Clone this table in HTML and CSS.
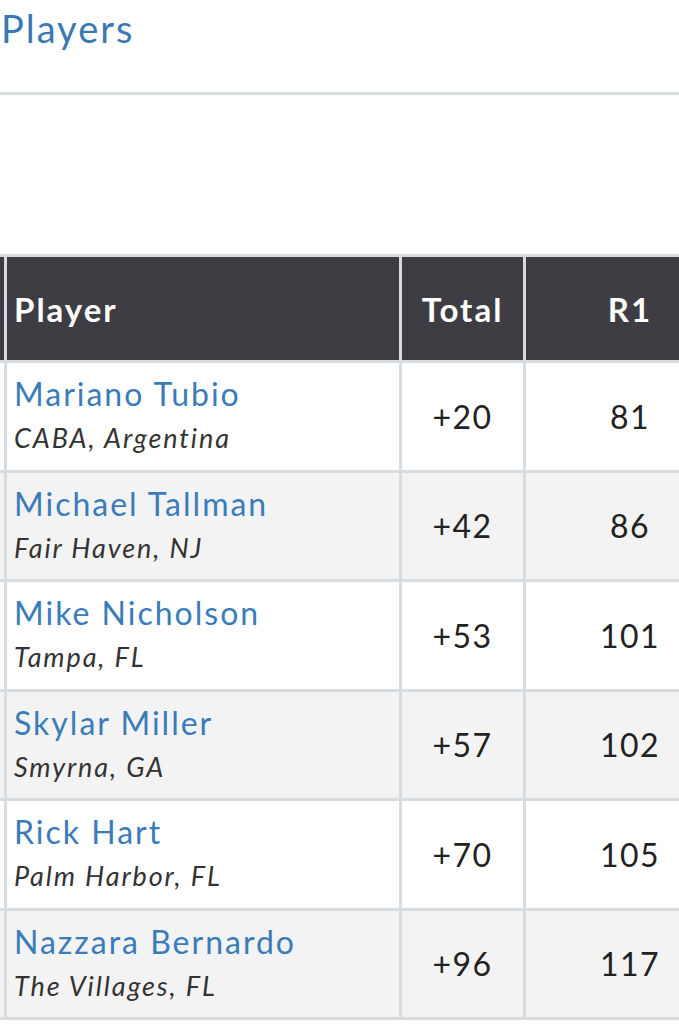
FILE: index.html
```html
<!DOCTYPE html>
<html>
<head>
<meta charset="utf-8">
<link rel="stylesheet" href="styles.css">
</head>
<body>
<header class="page-head">
  <h1 class="title">Players</h1>
</header>
<div class="table-wrap">
  <table class="board">
    <thead>
      <tr class="head-row">
        <th class="c-pos"></th>
        <th class="c-player">Player</th>
        <th class="c-total">Total</th>
        <th class="c-r1">R1</th>
      </tr>
    </thead>
    <tbody>
      <tr class="row">
        <td class="c-pos"></td>
        <td class="c-player"><div class="name">Mariano Tubio</div><div class="loc">CABA, Argentina</div></td>
        <td class="c-total">+20</td>
        <td class="c-r1">81</td>
      </tr>
      <tr class="row alt">
        <td class="c-pos"></td>
        <td class="c-player"><div class="name">Michael Tallman</div><div class="loc">Fair Haven, NJ</div></td>
        <td class="c-total">+42</td>
        <td class="c-r1">86</td>
      </tr>
      <tr class="row">
        <td class="c-pos"></td>
        <td class="c-player"><div class="name">Mike Nicholson</div><div class="loc">Tampa, FL</div></td>
        <td class="c-total">+53</td>
        <td class="c-r1">101</td>
      </tr>
      <tr class="row alt">
        <td class="c-pos"></td>
        <td class="c-player"><div class="name">Skylar Miller</div><div class="loc">Smyrna, GA</div></td>
        <td class="c-total">+57</td>
        <td class="c-r1">102</td>
      </tr>
      <tr class="row">
        <td class="c-pos"></td>
        <td class="c-player"><div class="name">Rick Hart</div><div class="loc">Palm Harbor, FL</div></td>
        <td class="c-total">+70</td>
        <td class="c-r1">105</td>
      </tr>
      <tr class="row alt">
        <td class="c-pos"></td>
        <td class="c-player"><div class="name">Nazzara Bernardo</div><div class="loc">The Villages, FL</div></td>
        <td class="c-total">+96</td>
        <td class="c-r1">117</td>
      </tr>
    </tbody>
  </table>
</div>
</body>
</html>
```
FILE: styles.css
```css
html, body {
  margin: 0;
  padding: 0;
  background: #ffffff;
  font-family: Lato, "Noto Sans", sans-serif;
  overflow-x: hidden;
}

.page-head {
  padding: 10px 0 45px 1px;
  border-bottom: 3px solid #d8dfe3;
}

.title {
  margin: 0;
  font-size: 38px;
  line-height: 37px;
  font-weight: 400;
  letter-spacing: 2px;
  color: #3b79b3;
}

.table-wrap {
  margin-top: 159px;
  overflow: hidden;
  width: 679px;
}

.board {
  border-collapse: separate;
  border-spacing: 0;
  table-layout: fixed;
  width: 735px;
}

.board th,
.board td {
  padding: 0;
  border-right: 3px solid #d6dce0;
  border-bottom: 3px solid #d6dce0;
  vertical-align: middle;
}

.board th {
  border-top: 3px solid #d6dce0;
  background: #3e3d43;
  color: #ffffff;
  font-weight: 700;
  font-size: 33px;
  letter-spacing: 2px;
}

.head-row {
  height: 109px;
}

.row {
  height: 109.5px;
  background: #ffffff;
}

.row.alt {
  background: #f3f3f3;
}

.board .c-pos {
  width: 4px;
}

.board .c-player {
  width: 385px;
  text-align: left;
  padding-left: 7px;
}

.board .c-total {
  width: 121px;
  text-align: center;
}

.board .c-r1 {
  width: 208px;
  text-align: center;
}

.board td.c-total,
.board td.c-r1 {
  font-size: 32px;
  letter-spacing: 1.5px;
  color: #222222;
}

.name {
  font-size: 32px;
  line-height: 38px;
  letter-spacing: 2px;
  color: #3a7cba;
}

.loc {
  margin-top: 6px;
  font-size: 27px;
  line-height: 38px;
  letter-spacing: 1.9px;
  font-style: italic;
  color: #333333;
}
```
